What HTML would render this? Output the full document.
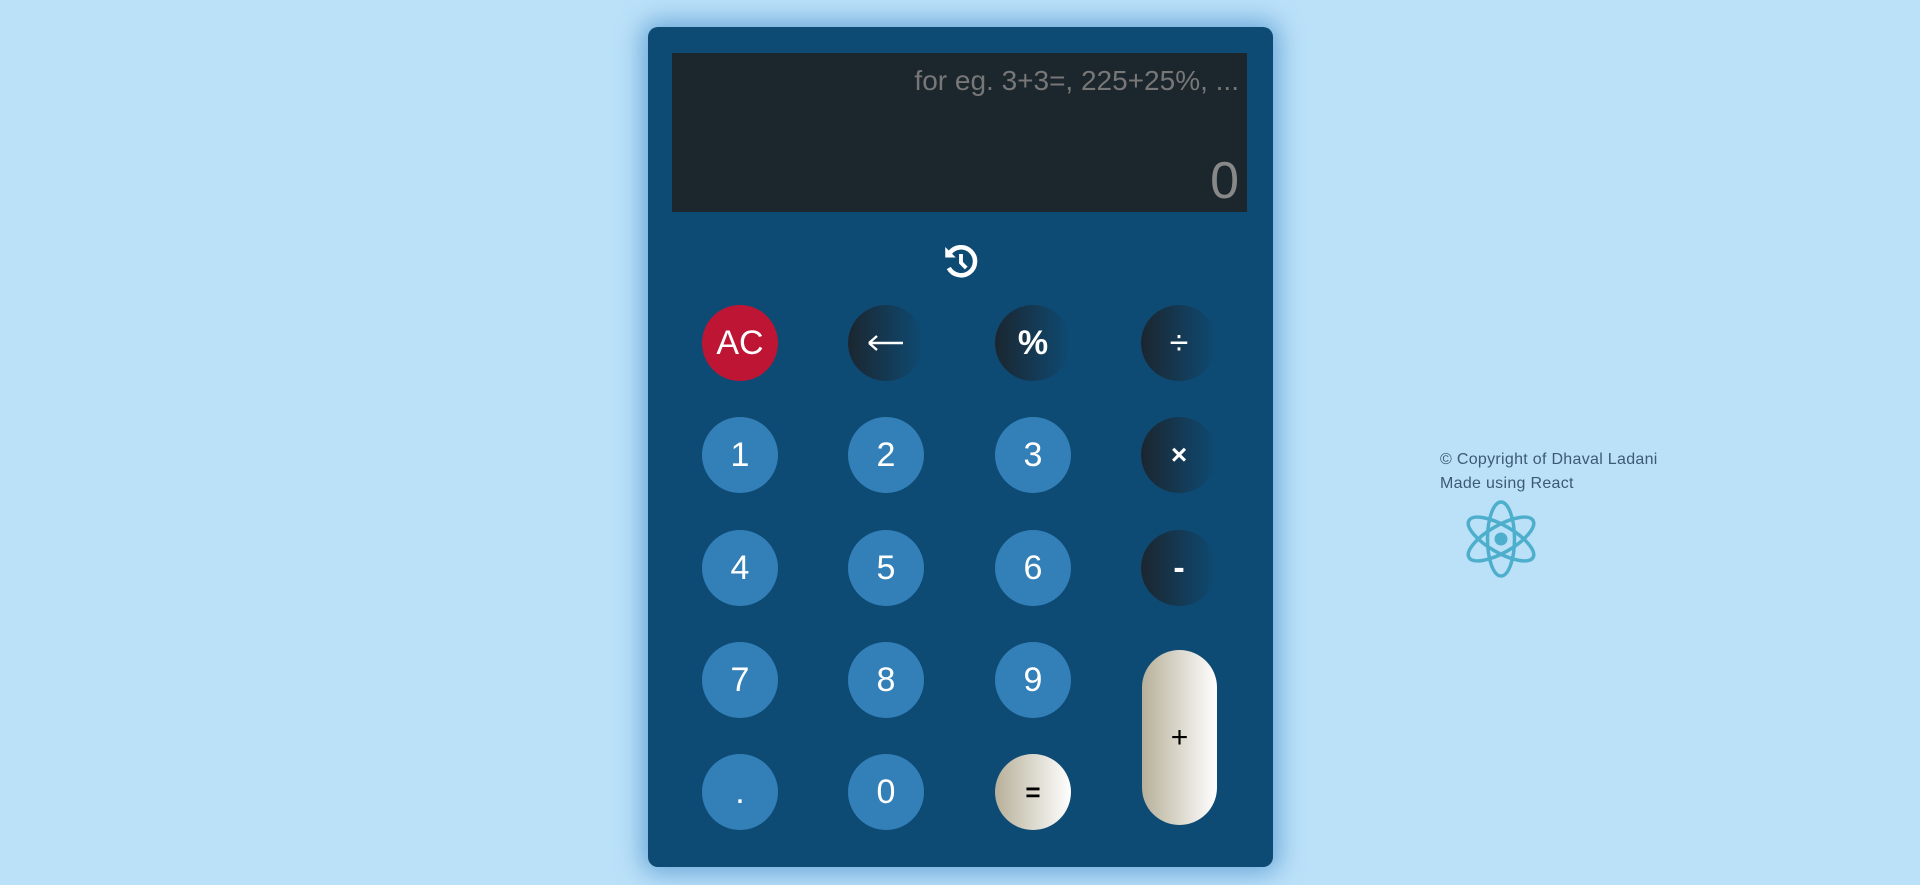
<!DOCTYPE html>
<html><head><style>
*{margin:0;padding:0;box-sizing:border-box}
body{width:1920px;height:885px;background:#bbe1f9;font-family:"Liberation Sans",sans-serif;position:relative;overflow:hidden}
.calc{position:absolute;left:648px;top:27px;width:625px;height:840px;background:#0e4b74;border-radius:10px;box-shadow:0 0 25px 6px rgba(40,120,190,.55)}
.disp{position:absolute;left:672px;top:53px;width:575px;height:159px;background:#1c262d}
.ph{position:absolute;right:8px;top:12px;font-size:28px;color:#777;white-space:nowrap}
.zero{position:absolute;right:8px;top:98px;font-size:52px;color:#888}
.b{position:absolute;width:76px;height:76px;border-radius:50%;color:#fff;font-size:34px;display:flex;align-items:center;justify-content:center;background:#3380b8}
.op{background:linear-gradient(to right,#1b2630,#0e4b74)}
.ac{background:#be1534}
.eq{background:linear-gradient(to right,#b7b09a,#fff);color:#000;font-size:26px;font-weight:bold}
.plus{position:absolute;left:1142px;top:650px;width:75px;height:175px;border-radius:38px;background:linear-gradient(to right,#b7b09a,#fff);color:#000;font-size:30px;display:flex;align-items:center;justify-content:center}
.foot{position:absolute;left:1440px;top:448px;font-size:16px;color:#3d5a73;line-height:24px;letter-spacing:.3px}
</style></head><body>
<div class="calc"></div>
<div class="disp"><div class="ph">for eg. 3+3=, 225+25%, ...</div><div class="zero">0</div></div>
<svg style="position:absolute;left:940px;top:240px" width="42" height="42" viewBox="0 0 24 24"><path d="M5.5 7.5A8 8 0 1 1 5 16" fill="none" stroke="#fff" stroke-width="2.6"/><path d="M3 4v6h6z" fill="#fff"/><path d="M12 8v5l3 3" fill="none" stroke="#fff" stroke-width="2.2"/></svg>
<div class="b ac" style="left:702px;top:305px;font-size:34px">AC</div>
<div class="b op" style="left:848px;top:305px"><svg width="40" height="20" viewBox="0 0 40 20"><path d="M3 10H37M3 10L11 3M3 10L11 17" fill="none" stroke="#fff" stroke-width="2.4"/></svg></div>
<div class="b op" style="left:995px;top:305px;font-weight:bold">%</div>
<div class="b op" style="left:1141px;top:305px">÷</div>
<div class="b" style="left:702px;top:417px">1</div>
<div class="b" style="left:848px;top:417px">2</div>
<div class="b" style="left:995px;top:417px">3</div>
<div class="b op" style="left:1141px;top:417px;font-weight:bold;font-size:28px">×</div>
<div class="b op" style="left:1141px;top:530px;font-weight:bold">-</div>
<div class="b" style="left:702px;top:530px">4</div>
<div class="b" style="left:848px;top:530px">5</div>
<div class="b" style="left:995px;top:530px">6</div>
<div class="b" style="left:702px;top:642px">7</div>
<div class="b" style="left:848px;top:642px">8</div>
<div class="b" style="left:995px;top:642px">9</div>
<div class="b" style="left:702px;top:754px">.</div>
<div class="b" style="left:848px;top:754px">0</div>
<div class="b eq" style="left:995px;top:754px">=</div>
<div class="plus">+</div>
<div class="foot">© Copyright of Dhaval Ladani<br>Made using React</div>
<svg style="position:absolute;left:1461px;top:499px" width="80" height="80" viewBox="-40 -40 80 80"><g fill="none" stroke="#4eafcc" stroke-width="3.5"><ellipse rx="37" ry="13.5" transform="rotate(30)"/><ellipse rx="37" ry="13.5" transform="rotate(90)"/><ellipse rx="37" ry="13.5" transform="rotate(150)"/></g><circle r="6.5" fill="#4eafcc"/></svg>
</body></html>
